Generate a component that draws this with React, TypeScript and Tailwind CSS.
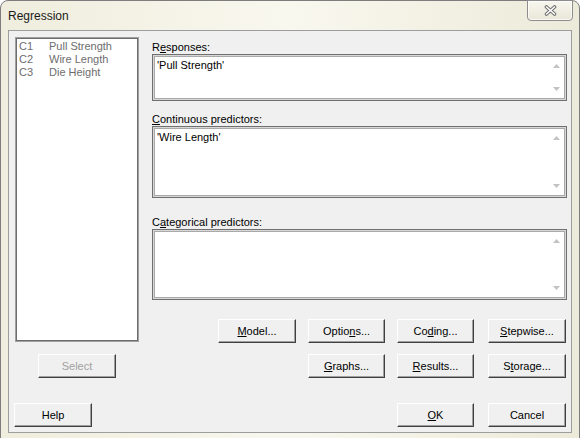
import type { ReactNode } from 'react';

function WinButton({ className = '', disabled = false, children }: { className?: string; disabled?: boolean; children: ReactNode }) {
  return (
    <button
      className={`h-[24px] shrink-0 bg-[#f0f0f0] border-t border-l border-r border-b border-t-white border-l-white border-r-[#404040] border-b-[#404040] shadow-[inset_-1px_-1px_0_#a0a0a0] text-[11px] leading-none ${
        disabled ? 'text-[#a0a0a0]' : 'text-black'
      } ${className}`}
    >
      {children}
    </button>
  );
}

function Arrow({ down = false }: { down?: boolean }) {
  return (
    <svg width="7" height="4" viewBox="0 0 7 4">
      <path d={down ? 'M0 0 H7 L3.5 4 Z' : 'M0 4 H7 L3.5 0 Z'} fill="#c2c2c2" />
    </svg>
  );
}

function FieldBox({ className, value }: { className: string; value?: string }) {
  return (
    <div className={`${className} border border-[#6f6f6f] bg-[#d8d8d8] p-px`}>
      <div className="h-full border border-[#a9a9a9] bg-white flex">
        <div className="flex-1 pl-[2px] pt-[1px] text-[11px] leading-[14px] text-black">{value}</div>
        <div className="w-[16px] flex flex-col items-center justify-between py-[7px]">
          <Arrow />
          <Arrow down />
        </div>
      </div>
    </div>
  );
}

const columns = [
  { id: 'C1', name: 'Pull Strength' },
  { id: 'C2', name: 'Wire Length' },
  { id: 'C3', name: 'Die Height' },
];

export default function App() {
  return (
    <div className="w-[580px] h-[438px] bg-white overflow-hidden font-['Liberation_Sans',Arial,sans-serif]">
      <div className="h-[446px] rounded-t-[8px] border border-[#7d7d7d] bg-linear-to-r from-[#efeddd] via-[#f9f8ef] to-[#ecead9] flex flex-col">
        {/* Title bar */}
        <div className="h-[29px] shrink-0 flex items-start justify-between pl-[7px] pr-[6px]">
          <span className="mt-[7px] text-[12px] leading-[16px] text-[#1a1a1a]">Regression</span>
          <div className="-mt-px w-[46px] h-[21px] rounded-b-[4px] border border-[#8d8d8d] bg-linear-to-b from-[#f8f7ef] to-[#e9e7d8] shadow-[inset_0_0_0_1px_rgba(255,255,255,0.7)] flex items-center justify-center">
            <svg width="13" height="11" viewBox="0 0 13 11">
              <path d="M2.5 2 L10.5 9 M10.5 2 L2.5 9" stroke="#6f6f6f" strokeWidth="3.6" strokeLinecap="round" />
              <path d="M2.5 2 L10.5 9 M10.5 2 L2.5 9" stroke="#ffffff" strokeWidth="1.6" strokeLinecap="round" />
            </svg>
          </div>
        </div>

        {/* Client area */}
        <div className="mx-[7px] h-[403px] shrink-0 border border-[#9d9d9d] bg-[#f0f0f0] pl-[5px] pt-[6px] text-[11px]">
          <div className="flex items-start">
            {/* Column list */}
            <div className="ml-[1px] w-[124px] h-[305px] border border-[#a0a0a0]">
              <div className="h-full border border-[#6d6d6d] bg-white pl-[2px] pt-[1px]">
                {columns.map((c) => (
                  <div key={c.id} className="flex leading-[13px] text-[#6d6d6d]">
                    <span className="w-[30px]">{c.id}</span>
                    <span>{c.name}</span>
                  </div>
                ))}
              </div>
            </div>

            {/* Fields */}
            <div className="ml-[13px] w-[415px] flex flex-col">
              <div className="mt-[3px] leading-[14px]">
                R<u>e</u>sponses:
              </div>
              <FieldBox className="h-[47px]" value="'Pull Strength'" />
              <div className="mt-[11px] leading-[14px]">
                <u>C</u>ontinuous predictors:
              </div>
              <FieldBox className="h-[72px]" value="'Wire Length'" />
              <div className="mt-[17px] leading-[14px]">
                C<u>a</u>tegorical predictors:
              </div>
              <FieldBox className="h-[71px]" />

              <div className="mt-[19px] flex">
                <WinButton className="ml-[66px] w-[78px]">
                  <u>M</u>odel...
                </WinButton>
                <WinButton className="ml-[12px] w-[77px]">
                  Optio<u>n</u>s...
                </WinButton>
                <WinButton className="ml-[12px] w-[77px]">
                  Co<u>d</u>ing...
                </WinButton>
                <WinButton className="ml-[14px] w-[78px]">
                  <u>S</u>tepwise...
                </WinButton>
              </div>
            </div>
          </div>

          <div className="mt-[11px] flex">
            <WinButton className="ml-[24px] w-[78px]" disabled>
              Select
            </WinButton>
            <WinButton className="ml-[192px] w-[77px]">
              <u>G</u>raphs...
            </WinButton>
            <WinButton className="ml-[12px] w-[77px]">
              <u>R</u>esults...
            </WinButton>
            <WinButton className="ml-[14px] w-[78px]">
              S<u>t</u>orage...
            </WinButton>
          </div>

          <div className="mt-[25px] flex">
            <WinButton className="w-[78px]">Help</WinButton>
            <WinButton className="ml-[305px] w-[77px]">
              <u>O</u>K
            </WinButton>
            <WinButton className="ml-[14px] w-[78px]">Cancel</WinButton>
          </div>
        </div>
      </div>
    </div>
  );
}
